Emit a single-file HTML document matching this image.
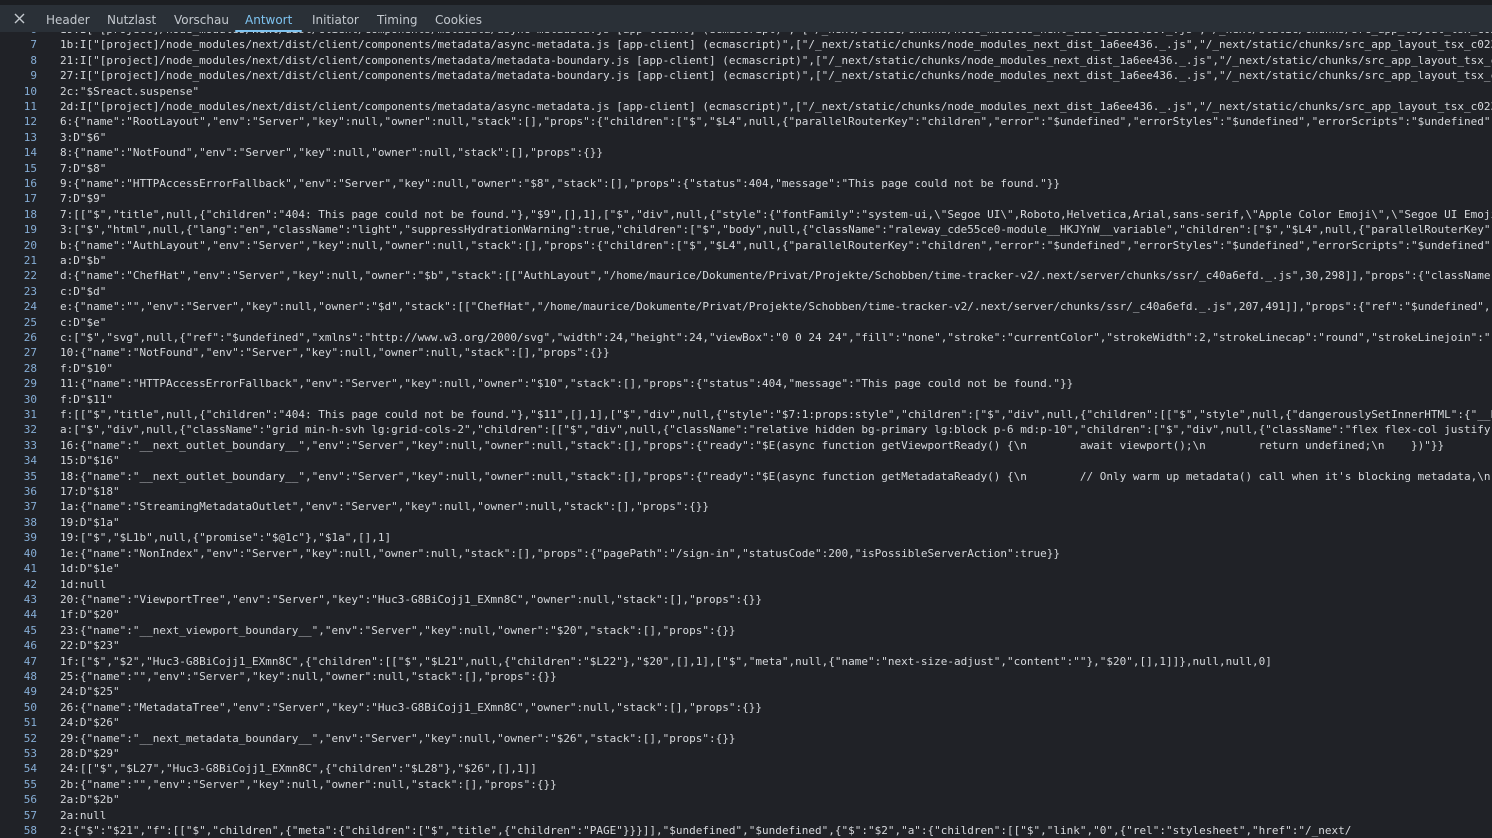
<!DOCTYPE html>
<html><head><meta charset="utf-8"><style>
html,body{margin:0;padding:0;background:#202227;width:1492px;height:828px;overflow:hidden}
.top{position:absolute;left:0;top:0;width:1492px;height:5px;background:#1c1e22;z-index:3}
.hdr{position:absolute;left:0;top:5px;width:1492px;height:27px;background:#2a3037;z-index:2;font-family:"DejaVu Sans","Liberation Sans",sans-serif;font-size:12px;color:#c3c8ce}
.hdr span{position:absolute;top:8px;white-space:nowrap}
.hdr .act{color:#7ec3f0}
.ul{position:absolute;left:235px;top:25px;width:67px;height:2px;background:#7ec3f0;border-radius:1px}
.code{position:absolute;left:0;top:21.9px;width:1492px;font-family:"DejaVu Sans Mono","Liberation Mono",monospace;font-size:11px;line-height:15.42px;color:#d6d9dd;z-index:1}
.l{height:15.42px;white-space:pre;overflow:hidden;position:relative}
.n{position:absolute;left:0;width:37px;text-align:right;color:#86aed6}
.t{position:absolute;left:60px}
</style></head><body>
<div class="top"></div>
<div class="hdr">
<svg style="position:absolute;left:14px;top:8px" width="11" height="11" viewBox="0 0 11 11"><path d="M1 1L10 10M10 1L1 10" stroke="#c3c8ce" stroke-width="1.4"/></svg>
<span style="left:46px">Header</span>
<span style="left:107px">Nutzlast</span>
<span style="left:174px">Vorschau</span>
<span class="act" style="left:245px">Antwort</span>
<span style="left:312px">Initiator</span>
<span style="left:377px">Timing</span>
<span style="left:435px">Cookies</span>
<div class="ul"></div>
</div>
<div class="code">
<div class="l"><span class="n">6</span><span class="t">19:I["[project]/node_modules/next/dist/client/components/metadata/async-metadata.js [app-client] (ecmascript)","["/_next/static/chunks/node_modules_next_dist_1a6ee436._.js","/_next/static/chunks/src_app_layout_tsx_c023</span></div>
<div class="l"><span class="n">7</span><span class="t">1b:I["[project]/node_modules/next/dist/client/components/metadata/async-metadata.js [app-client] (ecmascript)",["/_next/static/chunks/node_modules_next_dist_1a6ee436._.js","/_next/static/chunks/src_app_layout_tsx_c023</span></div>
<div class="l"><span class="n">8</span><span class="t">21:I["[project]/node_modules/next/dist/client/components/metadata/metadata-boundary.js [app-client] (ecmascript)",["/_next/static/chunks/node_modules_next_dist_1a6ee436._.js","/_next/static/chunks/src_app_layout_tsx_c</span></div>
<div class="l"><span class="n">9</span><span class="t">27:I["[project]/node_modules/next/dist/client/components/metadata/metadata-boundary.js [app-client] (ecmascript)",["/_next/static/chunks/node_modules_next_dist_1a6ee436._.js","/_next/static/chunks/src_app_layout_tsx_c</span></div>
<div class="l"><span class="n">10</span><span class="t">2c:"$Sreact.suspense"</span></div>
<div class="l"><span class="n">11</span><span class="t">2d:I["[project]/node_modules/next/dist/client/components/metadata/async-metadata.js [app-client] (ecmascript)",["/_next/static/chunks/node_modules_next_dist_1a6ee436._.js","/_next/static/chunks/src_app_layout_tsx_c023</span></div>
<div class="l"><span class="n">12</span><span class="t">6:{"name":"RootLayout","env":"Server","key":null,"owner":null,"stack":[],"props":{"children":["$","$L4",null,{"parallelRouterKey":"children","error":"$undefined","errorStyles":"$undefined","errorScripts":"$undefined",</span></div>
<div class="l"><span class="n">13</span><span class="t">3:D"$6"</span></div>
<div class="l"><span class="n">14</span><span class="t">8:{"name":"NotFound","env":"Server","key":null,"owner":null,"stack":[],"props":{}}</span></div>
<div class="l"><span class="n">15</span><span class="t">7:D"$8"</span></div>
<div class="l"><span class="n">16</span><span class="t">9:{"name":"HTTPAccessErrorFallback","env":"Server","key":null,"owner":"$8","stack":[],"props":{"status":404,"message":"This page could not be found."}}</span></div>
<div class="l"><span class="n">17</span><span class="t">7:D"$9"</span></div>
<div class="l"><span class="n">18</span><span class="t">7:[["$","title",null,{"children":"404: This page could not be found."},"$9",[],1],["$","div",null,{"style":{"fontFamily":"system-ui,\"Segoe UI\",Roboto,Helvetica,Arial,sans-serif,\"Apple Color Emoji\",\"Segoe UI Emoji</span></div>
<div class="l"><span class="n">19</span><span class="t">3:["$","html",null,{"lang":"en","className":"light","suppressHydrationWarning":true,"children":["$","body",null,{"className":"raleway_cde55ce0-module__HKJYnW__variable","children":["$","$L4",null,{"parallelRouterKey":</span></div>
<div class="l"><span class="n">20</span><span class="t">b:{"name":"AuthLayout","env":"Server","key":null,"owner":null,"stack":[],"props":{"children":["$","$L4",null,{"parallelRouterKey":"children","error":"$undefined","errorStyles":"$undefined","errorScripts":"$undefined",</span></div>
<div class="l"><span class="n">21</span><span class="t">a:D"$b"</span></div>
<div class="l"><span class="n">22</span><span class="t">d:{"name":"ChefHat","env":"Server","key":null,"owner":"$b","stack":[["AuthLayout","/home/maurice/Dokumente/Privat/Projekte/Schobben/time-tracker-v2/.next/server/chunks/ssr/_c40a6efd._.js",30,298]],"props":{"className"</span></div>
<div class="l"><span class="n">23</span><span class="t">c:D"$d"</span></div>
<div class="l"><span class="n">24</span><span class="t">e:{"name":"","env":"Server","key":null,"owner":"$d","stack":[["ChefHat","/home/maurice/Dokumente/Privat/Projekte/Schobben/time-tracker-v2/.next/server/chunks/ssr/_c40a6efd._.js",207,491]],"props":{"ref":"$undefined",</span></div>
<div class="l"><span class="n">25</span><span class="t">c:D"$e"</span></div>
<div class="l"><span class="n">26</span><span class="t">c:["$","svg",null,{"ref":"$undefined","xmlns":"http://www.w3.org/2000/svg","width":24,"height":24,"viewBox":"0 0 24 24","fill":"none","stroke":"currentColor","strokeWidth":2,"strokeLinecap":"round","strokeLinejoin":"r</span></div>
<div class="l"><span class="n">27</span><span class="t">10:{"name":"NotFound","env":"Server","key":null,"owner":null,"stack":[],"props":{}}</span></div>
<div class="l"><span class="n">28</span><span class="t">f:D"$10"</span></div>
<div class="l"><span class="n">29</span><span class="t">11:{"name":"HTTPAccessErrorFallback","env":"Server","key":null,"owner":"$10","stack":[],"props":{"status":404,"message":"This page could not be found."}}</span></div>
<div class="l"><span class="n">30</span><span class="t">f:D"$11"</span></div>
<div class="l"><span class="n">31</span><span class="t">f:[["$","title",null,{"children":"404: This page could not be found."},"$11",[],1],["$","div",null,{"style":"$7:1:props:style","children":["$","div",null,{"children":[["$","style",null,{"dangerouslySetInnerHTML":{"__h</span></div>
<div class="l"><span class="n">32</span><span class="t">a:["$","div",null,{"className":"grid min-h-svh lg:grid-cols-2","children":[["$","div",null,{"className":"relative hidden bg-primary lg:block p-6 md:p-10","children":["$","div",null,{"className":"flex flex-col justify-</span></div>
<div class="l"><span class="n">33</span><span class="t">16:{"name":"__next_outlet_boundary__","env":"Server","key":null,"owner":null,"stack":[],"props":{"ready":"$E(async function getViewportReady() {\n        await viewport();\n        return undefined;\n    })"}}</span></div>
<div class="l"><span class="n">34</span><span class="t">15:D"$16"</span></div>
<div class="l"><span class="n">35</span><span class="t">18:{"name":"__next_outlet_boundary__","env":"Server","key":null,"owner":null,"stack":[],"props":{"ready":"$E(async function getMetadataReady() {\n        // Only warm up metadata() call when it's blocking metadata,\n</span></div>
<div class="l"><span class="n">36</span><span class="t">17:D"$18"</span></div>
<div class="l"><span class="n">37</span><span class="t">1a:{"name":"StreamingMetadataOutlet","env":"Server","key":null,"owner":null,"stack":[],"props":{}}</span></div>
<div class="l"><span class="n">38</span><span class="t">19:D"$1a"</span></div>
<div class="l"><span class="n">39</span><span class="t">19:["$","$L1b",null,{"promise":"$@1c"},"$1a",[],1]</span></div>
<div class="l"><span class="n">40</span><span class="t">1e:{"name":"NonIndex","env":"Server","key":null,"owner":null,"stack":[],"props":{"pagePath":"/sign-in","statusCode":200,"isPossibleServerAction":true}}</span></div>
<div class="l"><span class="n">41</span><span class="t">1d:D"$1e"</span></div>
<div class="l"><span class="n">42</span><span class="t">1d:null</span></div>
<div class="l"><span class="n">43</span><span class="t">20:{"name":"ViewportTree","env":"Server","key":"Huc3-G8BiCojj1_EXmn8C","owner":null,"stack":[],"props":{}}</span></div>
<div class="l"><span class="n">44</span><span class="t">1f:D"$20"</span></div>
<div class="l"><span class="n">45</span><span class="t">23:{"name":"__next_viewport_boundary__","env":"Server","key":null,"owner":"$20","stack":[],"props":{}}</span></div>
<div class="l"><span class="n">46</span><span class="t">22:D"$23"</span></div>
<div class="l"><span class="n">47</span><span class="t">1f:["$","$2","Huc3-G8BiCojj1_EXmn8C",{"children":[["$","$L21",null,{"children":"$L22"},"$20",[],1],["$","meta",null,{"name":"next-size-adjust","content":""},"$20",[],1]]},null,null,0]</span></div>
<div class="l"><span class="n">48</span><span class="t">25:{"name":"","env":"Server","key":null,"owner":null,"stack":[],"props":{}}</span></div>
<div class="l"><span class="n">49</span><span class="t">24:D"$25"</span></div>
<div class="l"><span class="n">50</span><span class="t">26:{"name":"MetadataTree","env":"Server","key":"Huc3-G8BiCojj1_EXmn8C","owner":null,"stack":[],"props":{}}</span></div>
<div class="l"><span class="n">51</span><span class="t">24:D"$26"</span></div>
<div class="l"><span class="n">52</span><span class="t">29:{"name":"__next_metadata_boundary__","env":"Server","key":null,"owner":"$26","stack":[],"props":{}}</span></div>
<div class="l"><span class="n">53</span><span class="t">28:D"$29"</span></div>
<div class="l"><span class="n">54</span><span class="t">24:[["$","$L27","Huc3-G8BiCojj1_EXmn8C",{"children":"$L28"},"$26",[],1]]</span></div>
<div class="l"><span class="n">55</span><span class="t">2b:{"name":"","env":"Server","key":null,"owner":null,"stack":[],"props":{}}</span></div>
<div class="l"><span class="n">56</span><span class="t">2a:D"$2b"</span></div>
<div class="l"><span class="n">57</span><span class="t">2a:null</span></div>
<div class="l"><span class="n">58</span><span class="t">2:{"$":"$21","f":[["$","children",{"meta":{"children":["$","title",{"children":"PAGE"}}}]],"$undefined","$undefined",{"$":"$2","a":{"children":[["$","link","0",{"rel":"stylesheet","href":"/_next/</span></div>
</div>
</body></html>
